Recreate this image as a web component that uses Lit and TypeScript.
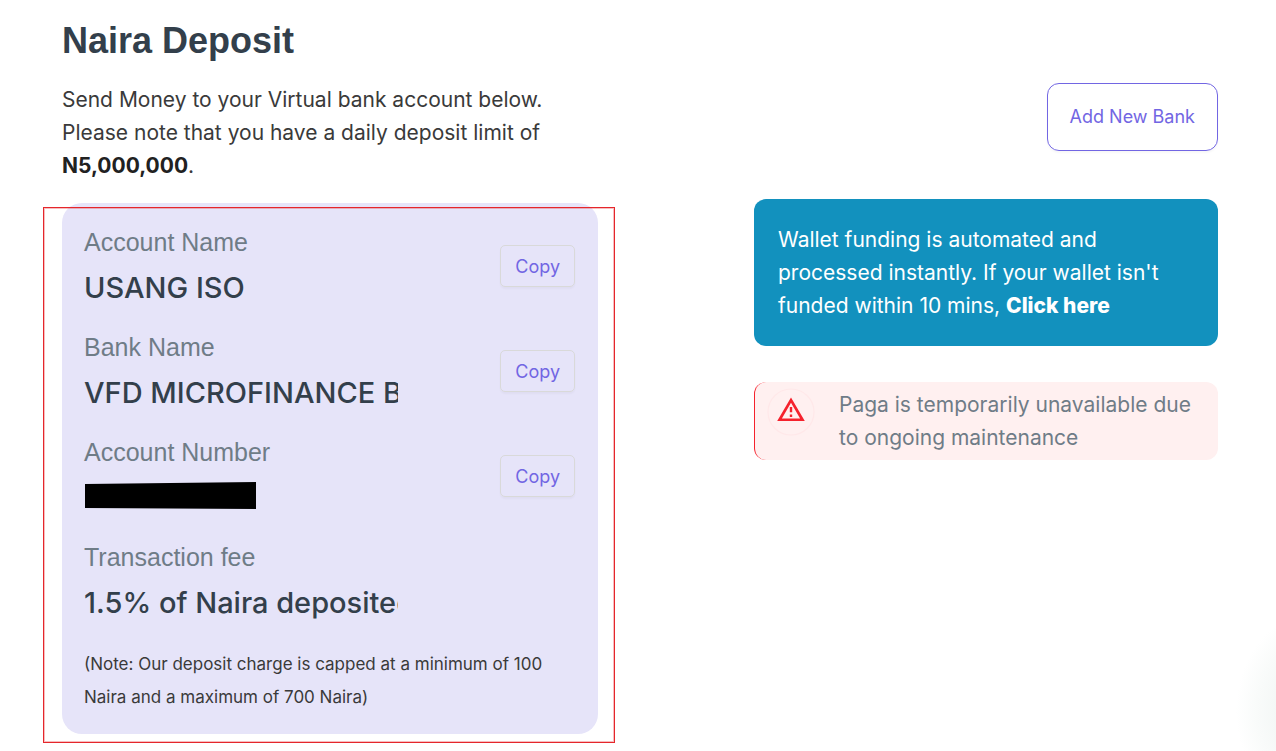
import { LitElement, html, css, svg, nothing } from "lit";
import { customElement } from "lit/decorators.js";

interface Detail {
  id: string;
  label: string;
  value: string;
  copy: boolean;
  hidden?: boolean;
}

const DETAILS: Detail[] = [
  { id: "account-name", label: "Account Name", value: "USANG ISO", copy: true },
  { id: "bank-name", label: "Bank Name", value: "VFD MICROFINANCE BANK", copy: true },
  { id: "account-number", label: "Account Number", value: "", copy: true, hidden: true },
  { id: "fee", label: "Transaction fee", value: "1.5% of Naira deposited", copy: false },
];

@customElement("app-root")
export class AppRoot extends LitElement {
  static styles = css`
    :host {
      display: block;
      position: relative;
      box-sizing: border-box;
      min-height: 100vh;
      padding: 14px 58px 17px 62px;
      overflow: hidden;
      background: #fff;
      color: #3a3a3a;
      font-family: Inter, sans-serif;
      font-size: 21px;
      font-weight: 400;
      line-height: 33px;
    }
    * {
      box-sizing: border-box;
    }
    h1,
    p {
      margin: 0;
    }
    h1 {
      margin-bottom: 15px;
      color: #333f4b;
      font: 700 36px/54px "Liberation Sans", sans-serif;
    }
    .columns {
      display: grid;
      grid-template-columns: minmax(0, 536fr) minmax(0, 464fr);
      column-gap: 156px;
      align-items: start;
    }
    .intro {
      max-width: 500px;
      margin-bottom: 21px;
    }
    .intro b {
      color: #212121;
      font-weight: 700;
    }
    .card {
      position: relative;
      padding: 22px 23px 20px 22px;
      border-radius: 20px;
      background: #e6e4f9;
    }
    .frame {
      position: absolute;
      inset: 4px -17px -9px -19px;
      border: 1px solid #e5262b;
      outline: 1px solid rgba(229, 38, 43, 0.3);
      outline-offset: -2px;
      pointer-events: none;
    }
    .rows {
      display: grid;
      gap: 24px;
      margin-bottom: 27px;
    }
    .row {
      display: flex;
      align-items: center;
      justify-content: space-between;
      height: 81px;
    }
    .field {
      display: grid;
      gap: 11px;
      width: 64%;
    }
    .field label {
      color: #6f7c87;
      font: 400 25px/34px "Liberation Sans", sans-serif;
    }
    .field input {
      width: 100%;
      height: 36px;
      padding: 0;
      border: 0;
      outline: 0;
      background: transparent;
      color: #333f4b;
      font: 550 29px/36px Inter, sans-serif;
    }
    .redacted {
      display: block;
      width: 173px;
      height: 36px;
    }
    button {
      background: transparent;
      color: #7266e3;
      font: 400 18px/24px Inter, sans-serif;
      box-shadow: 0 2px 2px rgba(0, 0, 0, 0.03);
      cursor: pointer;
    }
    .copy {
      padding: 9px 14px 7px;
      border: 1px solid #d9d9d9;
      border-radius: 5px;
    }
    .note {
      font-size: 17px;
    }
    .side {
      display: flex;
      flex-direction: column;
    }
    .add {
      align-self: flex-end;
      margin-bottom: 48px;
      padding: 21px 22px;
      border: 1px solid #7266e3;
      border-radius: 12px;
    }
    .info {
      margin-bottom: 36px;
      padding: 24px;
      border-radius: 12px;
      background: #1291be;
      color: #fff;
    }
    .info a {
      color: inherit;
      font-weight: 800;
      text-decoration: none;
    }
    .alert {
      display: flex;
      gap: 24px;
      padding: 6px 24px 6px 12px;
      border-left: 1px solid #f5222d;
      border-radius: 12px;
      background: #fff0f0;
      color: #6f7c87;
    }
    .badge {
      flex: none;
      width: 48px;
      height: 48px;
    }
    .glow {
      position: absolute;
      right: -125px;
      bottom: -60px;
      width: 165px;
      height: 200px;
      border-radius: 50%;
      background: radial-gradient(closest-side, #eef3f1 20%, #f9fbfa 75%, #fff 100%);
    }
  `;

  private renderValue(d: Detail) {
    if (d.hidden) {
      return html`<svg class="redacted" viewBox="0 0 173 36" role="img" aria-label="Hidden">
        ${svg`<path d="M1 4 172 2V29L1 28Z" fill="#000" />`}
      </svg>`;
    }
    return html`<input id=${d.id} type="text" readonly .value=${d.value} />`;
  }

  private renderRow(d: Detail) {
    return html`<div class="row">
      <div class="field">
        <label for=${d.id}>${d.label}</label>
        ${this.renderValue(d)}
      </div>
      ${d.copy ? html`<button class="copy" type="button">Copy</button>` : nothing}
    </div>`;
  }

  render() {
    return html`
      <h1>Naira Deposit</h1>
      <div class="columns">
        <main>
          <p class="intro">
            Send Money to your Virtual bank account below. Please note that you have a daily
            deposit limit of <b>N5,000,000</b>.
          </p>
          <section class="card">
            <div class="rows">${DETAILS.map((d) => this.renderRow(d))}</div>
            <p class="note">
              (Note: Our deposit charge is capped at a minimum of 100 Naira and a maximum of 700
              Naira)
            </p>
            <div class="frame"></div>
          </section>
        </main>
        <aside class="side">
          <button class="add" type="button">Add New Bank</button>
          <p class="info">
            Wallet funding is automated and processed instantly. If your wallet isn't funded
            within 10 mins, <a href="#">Click here</a>
          </p>
          <div class="alert" role="alert">
            <svg class="badge" viewBox="0 0 48 48" aria-hidden="true">
              <circle cx="24" cy="24" r="23" fill="none" stroke="#ffe8e9" stroke-width="1.2" />
              <path
                fill="#f5222d"
                fill-rule="evenodd"
                d="M24 9.500 37.800 33H10.200ZM24 14.800 14.900 30.400H33.100ZM22.800 19h2.400v5.200h-2.400ZM22.800 26.600h2.400v2.300h-2.400Z"
              />
            </svg>
            <p>Paga is temporarily unavailable due to ongoing maintenance</p>
          </div>
        </aside>
      </div>
      <div class="glow"></div>
    `;
  }
}
